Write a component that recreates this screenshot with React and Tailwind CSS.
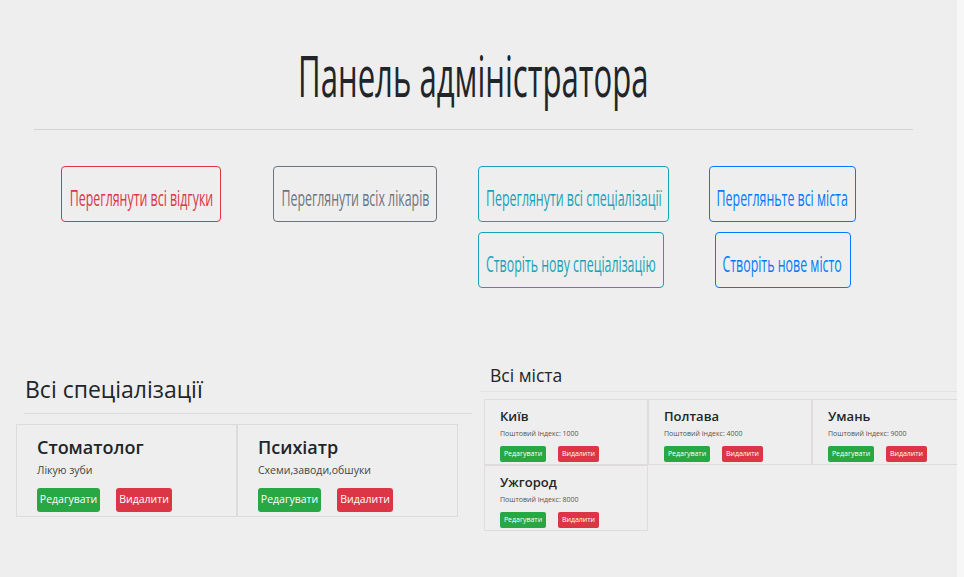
// Admin panel: header, action buttons, specializations and cities lists.

const topButtons = {
  red: "border-[#dc3545] text-[#dc3545]",
  gray: "border-[#6c757d] text-[#6c757d]",
  teal: "border-[#17a2b8] text-[#17a2b8]",
  blue: "border-[#007bff] text-[#007bff]",
};

const specializations = [
  { id: 1, name: "Стоматолог", description: "Лікую зуби" },
  { id: 2, name: "Психіатр", description: "Схеми,заводи,обшуки" },
];

const cities = [
  { id: 1, name: "Київ", zip: "1000" },
  { id: 2, name: "Полтава", zip: "4000" },
  { id: 3, name: "Умань", zip: "9000" },
  { id: 4, name: "Ужгород", zip: "8000" },
];

function OutlineButton({ color, width, children }) {
  return (
    <button
      type="button"
      className={`flex h-[56px] shrink-0 items-center justify-center rounded-[4px] border bg-transparent ${topButtons[color]}`}
      style={{ width }}
    >
      <span className="inline-block whitespace-nowrap pt-[8px] text-[21px] leading-none scale-x-[0.59]">
        {children}
      </span>
    </button>
  );
}

function SpecCard({ spec }) {
  return (
    <div className="h-[93px] w-[221px] border border-[#dcdcdc] px-[20px] pt-[10px]">
      <h3 className="text-[18px] font-semibold leading-[24px] text-[#212529]">
        {spec.name}
      </h3>
      <p className="mt-[4px] text-[10.5px] leading-[14px] text-[#444]">
        {spec.description}
      </p>
      <div className="mt-[11px] flex gap-[16px]">
        <button
          type="button"
          className="h-[24px] w-[63px] rounded-[3px] bg-[#28a745] text-[10.5px] font-medium text-white"
        >
          Редагувати
        </button>
        <button
          type="button"
          className="h-[24px] w-[56px] rounded-[3px] bg-[#dc3545] text-[10.5px] font-medium text-white"
        >
          Видалити
        </button>
      </div>
    </div>
  );
}

function CityCard({ city }) {
  return (
    <div className="h-[66px] w-[164px] shrink-0 border border-[#e0dcdc] px-[15px] pt-[7px]">
      <h4 className="text-[13px] font-semibold leading-[18px] text-[#212529]">
        {city.name}
      </h4>
      <p className="mt-[4px] text-[7px] leading-[10px] text-[#555]">
        Поштовий індекс: {city.zip}
      </p>
      <div className="mt-[7px] flex gap-[12px]">
        <button
          type="button"
          className="h-[16px] w-[46px] rounded-[2px] bg-[#28a745] text-[7px] text-white"
        >
          Редагувати
        </button>
        <button
          type="button"
          className="h-[16px] w-[41px] rounded-[2px] bg-[#dc3545] text-[7px] text-white"
        >
          Видалити
        </button>
      </div>
    </div>
  );
}

export default function App() {
  return (
    <div
      className="flex min-h-[577px] w-full bg-[#f7f7f7]"
      style={{ fontFamily: '"Open Sans", "Noto Sans", sans-serif' }}
    >
      <div className="w-[957px] shrink-0 overflow-hidden bg-[#eeeeee]">
        <div className="ml-[34px] w-[879px]">
          <div className="flex justify-center pt-[47px]">
            <h1 className="inline-block whitespace-nowrap text-[56px] font-medium leading-none text-[#212529] scale-x-[0.556]">
              Панель адміністратора
            </h1>
          </div>
          <hr className="mt-[26px] border-t border-[#d4d4d4]" />
        </div>

        <div className="mt-[36px] flex items-start pl-[61px]">
          <OutlineButton color="red" width={160}>
            Переглянути всі відгуки
          </OutlineButton>
          <div className="ml-[52px]">
            <OutlineButton color="gray" width={164}>
              Переглянути всіх лікарів
            </OutlineButton>
          </div>
          <div className="ml-[41px] flex flex-col items-start gap-[10px]">
            <OutlineButton color="teal" width={191}>
              Переглянути всі спеціалізації
            </OutlineButton>
            <OutlineButton color="teal" width={186}>
              Створіть нову спеціалізацію
            </OutlineButton>
          </div>
          <div className="ml-[40px] flex w-[147px] flex-col items-center gap-[10px]">
            <OutlineButton color="blue" width={147}>
              Перегляньте всі міста
            </OutlineButton>
            <OutlineButton color="blue" width={136}>
              Створіть нове місто
            </OutlineButton>
          </div>
        </div>

        <div className="mt-[75px] flex items-start">
          <section className="mt-[11px] w-[480px] shrink-0 pl-[16px]">
            <h2 className="pl-[9px] text-[23px] font-medium leading-[30px] text-[#212529]">
              Всі спеціалізації
            </h2>
            <hr className="ml-[8px] mt-[9px] w-[448px] border-t border-[#dddddd]" />
            <div className="mt-[10px] flex">
              {specializations.map((spec) => (
                <SpecCard key={spec.id} spec={spec} />
              ))}
            </div>
          </section>

          <section className="w-[477px] shrink-0 pl-[4px]">
            <h2 className="pl-[6px] text-[17.5px] font-medium leading-[24px] text-[#212529]">
              Всі міста
            </h2>
            <hr className="-ml-[4px] mt-[4px] border-t border-[#e2e2e2]" />
            <div className="mt-[7px] flex w-[500px] flex-wrap">
              {cities.map((city) => (
                <CityCard key={city.id} city={city} />
              ))}
            </div>
          </section>
        </div>
      </div>
    </div>
  );
}
